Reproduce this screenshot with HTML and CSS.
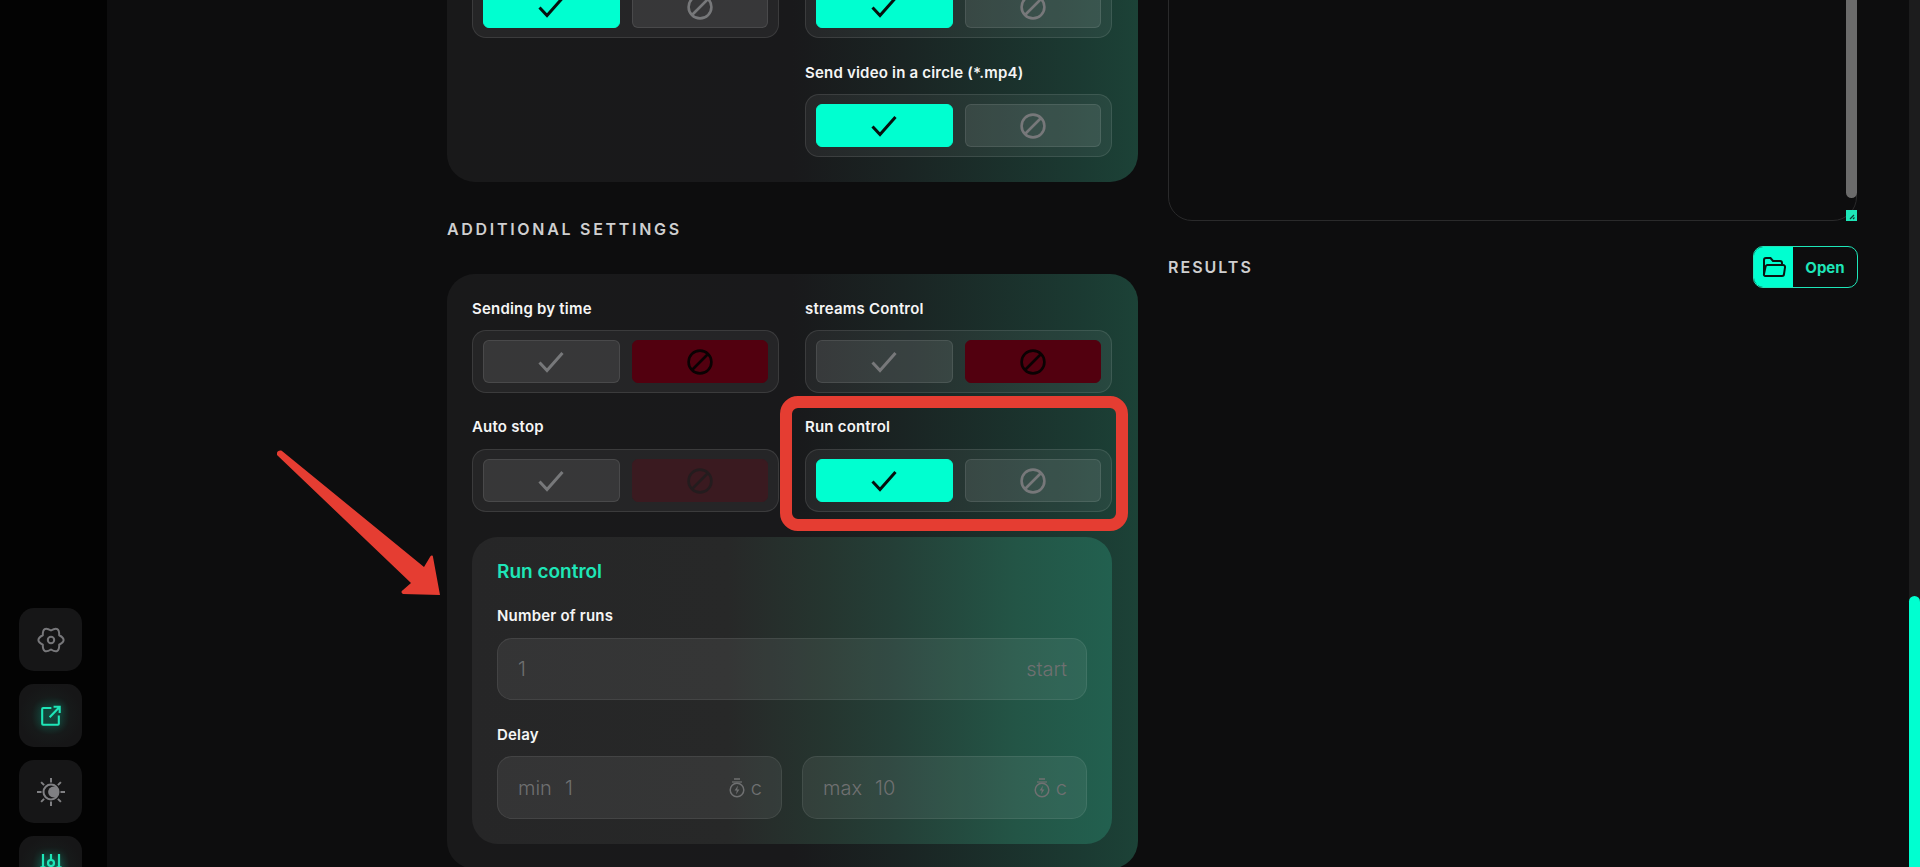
FILE: index.html
```html
<!DOCTYPE html>
<html lang="en">
<head>
<meta charset="utf-8">
<title>Settings</title>
<link rel="stylesheet" href="styles.css">
</head>
<body>
<svg class="sprite" width="0" height="0" aria-hidden="true">
  <symbol id="check" viewBox="0 0 26 22"><path d="M1.500 11.500 9 19.500 24.500 2" fill="none" stroke="currentColor" stroke-width="3"/></symbol>
  <symbol id="ban" viewBox="0 0 26 26"><circle cx="13" cy="13" r="11.400" fill="none" stroke="currentColor" stroke-width="2.600"/><path d="M20.500 5.500 5.500 20.500" fill="none" stroke="currentColor" stroke-width="2.600"/></symbol>
  <symbol id="timer" viewBox="0 0 16 20"><path d="M5 1h6" fill="none" stroke="currentColor" stroke-width="1.500"/><path d="M3 4h10" fill="none" stroke="currentColor" stroke-width="1.200"/><circle cx="8" cy="12" r="6.800" fill="none" stroke="currentColor" stroke-width="1.500"/><path d="M9 7.500 5.600 12.600h2.200L7 16.500l3.400-5.100H8.200z" fill="currentColor"/></symbol>
</svg>
<div class="app">
  <aside class="sidebar">
    <button class="side-btn">
      <svg width="28" height="28" viewBox="0 0 28 28" fill="none" stroke="#77777a" stroke-width="2" stroke-linejoin="round"><path d="M14 4.500Q22.500-.7 22.200 9.250 31 14 22.200 18.750 22.500 28.700 14 23.500 5.500 28.700 5.800 18.750-3 14 5.800 9.250 5.500-.7 14 4.500z"/><circle cx="14" cy="14" r="3.200"/></svg>
    </button>
    <button class="side-btn side-btn-on">
      <svg width="21" height="21" viewBox="0 0 24 24" fill="none" stroke="#1ee6b8" stroke-width="2.400"><path d="M13 3.500H3.500a1 1 0 0 0-1 1v17a1 1 0 0 0 1 1h17a1 1 0 0 0 1-1V12"/><path d="M11 14 22 2.500M15.500 2H22.500V9"/></svg>
    </button>
    <button class="side-btn">
      <svg width="30" height="30" viewBox="0 0 30 30" fill="none" stroke="#808083" stroke-width="2"><circle cx="15" cy="15" r="7.500"/><path d="M15 1v4.500M15 24.500V29M1 15h4.500M24.500 15H29M5.100 5.100l3 3M21.900 21.900l3 3M5.100 24.900l3-3M21.900 8.100l3-3"/><circle cx="17.500" cy="15" r="5.400" fill="#808083" stroke="none"/></svg>
    </button>
    <button class="side-btn side-btn-on">
      <svg width="22" height="28" viewBox="0 0 22 28" fill="none" stroke="#1ee6b8" stroke-width="2.200"><path d="M3 0v13M3 19v9M11 0v6M11 12v16M19 0v13M19 19v9"/><circle cx="3" cy="16" r="3"/><circle cx="11" cy="9" r="3"/><circle cx="19" cy="16" r="3"/></svg>
    </button>
  </aside>
  <main class="main">
    <section class="col-left">
      <div class="card card-top">
        <div class="field">
          <div class="group">
            <div class="opt opt-on"><svg class="ico-check"><use href="#check"/></svg></div>
            <div class="opt"><svg class="ico-ban"><use href="#ban"/></svg></div>
          </div>
        </div>
        <div class="field">
          <div class="group">
            <div class="opt opt-on"><svg class="ico-check"><use href="#check"/></svg></div>
            <div class="opt"><svg class="ico-ban"><use href="#ban"/></svg></div>
          </div>
        </div>
        <div class="field field-second">
          <div class="label">Send video in a circle (*.mp4)</div>
          <div class="group">
            <div class="opt opt-on"><svg class="ico-check"><use href="#check"/></svg></div>
            <div class="opt"><svg class="ico-ban"><use href="#ban"/></svg></div>
          </div>
        </div>
      </div>

      <h2 class="section-title heading-additional">ADDITIONAL SETTINGS</h2>

      <div class="card">
        <div class="field">
          <div class="label">Sending by time</div>
          <div class="group">
            <div class="opt"><svg class="ico-check"><use href="#check"/></svg></div>
            <div class="opt opt-off"><svg class="ico-ban"><use href="#ban"/></svg></div>
          </div>
        </div>
        <div class="field">
          <div class="label">streams Control</div>
          <div class="group">
            <div class="opt"><svg class="ico-check"><use href="#check"/></svg></div>
            <div class="opt opt-off"><svg class="ico-ban"><use href="#ban"/></svg></div>
          </div>
        </div>
        <div class="field field-low">
          <div class="label">Auto stop</div>
          <div class="group">
            <div class="opt"><svg class="ico-check"><use href="#check"/></svg></div>
            <div class="opt opt-off-dim"><svg class="ico-ban"><use href="#ban"/></svg></div>
          </div>
        </div>
        <div class="field field-low field-marked">
          <div class="label">Run control</div>
          <div class="group">
            <div class="opt opt-on"><svg class="ico-check"><use href="#check"/></svg></div>
            <div class="opt"><svg class="ico-ban"><use href="#ban"/></svg></div>
          </div>
          <div class="red-frame"></div>
        </div>

        <div class="panel">
          <svg class="red-arrow" width="170" height="150" viewBox="0 0 170 150">
            <path d="M1 3C1 1 4 0 6 1L148 117 154 107C155 105 157 105 157 107L164 145 127 144C125 143 125 141 127 140L135 133 1 5z" fill="#e53d32"/>
          </svg>
          <h3 class="panel-title">Run control</h3>
          <div class="label label-panel">Number of runs</div>
          <div class="input input-runs">
            <span class="val">1</span>
            <span class="suffix">start</span>
          </div>
          <div class="label label-panel label-delay">Delay</div>
          <div class="input-row">
            <div class="input">
              <span class="pre">min</span><span class="val">1</span>
              <span class="suffix"><svg class="ico-timer"><use href="#timer"/></svg>c</span>
            </div>
            <div class="input">
              <span class="pre">max</span><span class="val">10</span>
              <span class="suffix"><svg class="ico-timer"><use href="#timer"/></svg>c</span>
            </div>
          </div>
        </div>
      </div>
    </section>

    <section class="col-right">
      <div class="textbox">
        <div class="textbox-thumb"></div>
        <div class="textbox-grip"><svg width="11" height="11" viewBox="0 0 11 11"><path d="M4 9 8 5M7 9 8.500 7.500" stroke="#0b3b33" stroke-width="1.200" fill="none"/></svg></div>
      </div>
      <div class="results-row">
        <h2 class="section-title">RESULTS</h2>
        <button class="open-btn">
          <span class="open-ico">
            <svg width="24" height="20" viewBox="0 0 24 20" fill="none" stroke="#0a1412" stroke-width="2"><path d="M2 17V3a2 2 0 0 1 2-2h4.500l2.500 3h7a2 2 0 0 1 2 2v1"/><path d="M5.500 8h15.500a2 2 0 0 1 2 2.300l-1 6.700a2 2 0 0 1-2 2H3.500a1.500 1.500 0 0 1-1.500-2l1.500-7a2 2 0 0 1 2-2z"/></svg>
          </span>
          <span class="open-text">Open</span>
        </button>
      </div>
    </section>
  </main>
  <div class="page-scroll"><div class="page-thumb"></div></div>
</div>
</body>
</html>
```
FILE: styles.css
```css
* { box-sizing: border-box; margin: 0; padding: 0; }
html, body { height: 100%; overflow: hidden; background: #0d0d0e; }
body { font-family: "Inter", "Liberation Sans", sans-serif; color: #fff; }
.sprite { position: absolute; }

.app { display: flex; height: 867px; overflow: hidden; }

.sidebar {
  flex: 0 0 107px;
  background: #030303;
  padding: 608px 0 0 19px;
  display: flex;
  flex-direction: column;
  gap: 13px;
  overflow: hidden;
}
.side-btn {
  flex: 0 0 63px;
  width: 63px;
  border: 0;
  border-radius: 15px;
  background: #161617;
  display: flex;
  align-items: center;
  justify-content: center;
}
.side-btn-on {
  background: radial-gradient(circle at 50% 50%, #15352e 0, #171a1a 45%, #161617 70%);
}
.side-btn-on svg { filter: drop-shadow(0 0 4px rgba(0, 255, 205, .45)); }

.main {
  flex: 1;
  display: flex;
  gap: 30px;
  padding-left: 340px;
  padding-right: 52px;
  min-width: 0;
  align-items: flex-start;
}
.col-left { flex: 0 0 691px; margin-top: -50px; }
.col-right { flex: 0 0 689px; margin-top: -50px; }

.card {
  border-radius: 28px;
  padding: 25px 26px 25px 25px;
  background: linear-gradient(90deg, #19191a 0, #19191b 50%, #1a2423 66%, #1b3a32 92%, #1c4237 100%);
  display: grid;
  grid-template-columns: 1fr 1fr;
  column-gap: 26px;
  row-gap: 25px;
}
.field { position: relative; min-width: 0; }
.field-second { grid-column: 2; }
.field-low { margin-top: -1px; }
.field-low .label { margin-bottom: 12px; }

.label {
  font-size: 15px;
  line-height: 20px;
  font-weight: 600;
  letter-spacing: .2px;
  margin-bottom: 11px;
  color: #f5f5f5;
  white-space: nowrap;
}
.group {
  height: 63px;
  border: 1px solid rgba(255, 255, 255, .1);
  border-radius: 14px;
  background: rgba(255, 255, 255, .055);
  padding: 9px 10px;
  display: grid;
  grid-template-columns: 1fr 1fr;
  column-gap: 12px;
}
.opt {
  border: 1px solid rgba(255, 255, 255, .09);
  border-radius: 6px;
  background: rgba(255, 255, 255, .085);
  color: #77787a;
  display: flex;
  align-items: center;
  justify-content: center;
}
.opt-on { background: #00ffd0; border-color: #00ffd0; color: #06100e; }
.opt-off { background: #52000f; border-color: #52000f; color: #0a0203; }
.opt-off-dim { background: #3a1a20; border-color: #3a1a20; color: #241c1e; }
.ico-check { width: 26px; height: 22px; }
.ico-ban { width: 26px; height: 26px; }

.section-title {
  font-size: 16px;
  line-height: 20px;
  font-weight: 600;
  letter-spacing: 2px;
  color: #cfcfd0;
}
.heading-additional { margin: 37px 0 35px; letter-spacing: 2.7px; }

.field-marked { z-index: 2; }
.red-frame {
  position: absolute;
  inset: -21px -16px -19px -25px;
  border: 12px solid #e53d32;
  border-radius: 18px;
  pointer-events: none;
}

.panel {
  grid-column: 1 / -1;
  position: relative;
  border-radius: 26px;
  padding: 23px 25px 25px;
  background: linear-gradient(90deg, #262627 0, #272828 40%, #25352f 55%, #243f37 66%, #235546 85%, #22604f 100%);
  min-width: 0;
}
.red-arrow { position: absolute; left: -196px; top: -87px; }
.panel-title {
  font-size: 19px;
  line-height: 24px;
  font-weight: 600;
  color: #1ee6b8;
  margin-bottom: 22px;
}
.label-panel { margin-bottom: 12px; }
.label-delay { margin-bottom: 11px; }
.input {
  height: 63px;
  border: 1px solid rgba(255, 255, 255, .08);
  border-radius: 15px;
  background: rgba(255, 255, 255, .065);
  padding: 0 19px 0 20px;
  display: flex;
  align-items: center;
  font-size: 20px;
  font-weight: 300;
  color: #6f7071;
}
.input-runs { height: 62px; margin-bottom: 25px; }
.input-row { display: grid; grid-template-columns: 1fr 1fr; column-gap: 20px; }
.pre { margin-right: 13px; }
.suffix { margin-left: auto; display: flex; align-items: center; gap: 6px; }
.ico-timer { width: 16px; height: 20px; }

.textbox {
  position: relative;
  height: 271px;
  border: 1px solid #2a2a2b;
  border-radius: 24px;
  background: #0d0d0e;
  margin-bottom: 25px;
}
.textbox-thumb {
  position: absolute;
  right: -1px;
  top: 0;
  width: 11px;
  height: 247px;
  border-radius: 0 0 6px 6px;
  background: #6b6b6b;
}
.textbox-grip {
  position: absolute;
  right: -1px;
  bottom: -1px;
  width: 11px;
  height: 11px;
  background: #1ee6b8;
  display: flex;
}

.results-row { display: flex; align-items: center; justify-content: space-between; height: 42px; }
.open-btn {
  width: 105px;
  height: 42px;
  margin-right: -1px;
  display: flex;
  border: 1px solid #1ee6b8;
  border-radius: 10px;
  overflow: hidden;
  background: transparent;
  font-family: inherit;
}
.open-ico {
  flex: 0 0 39px;
  background: #00ffd0;
  display: flex;
  align-items: center;
  justify-content: center;
}
.open-text {
  flex: 1;
  display: flex;
  align-items: center;
  justify-content: center;
  font-size: 15px;
  font-weight: 700;
  color: #1ee6b8;
}

.page-scroll {
  position: relative;
  flex: 0 0 11px;
  background: #1c1c1d;
}
.page-thumb {
  position: absolute;
  left: 0;
  right: 0;
  top: 596px;
  bottom: 0;
  background: #00ffd0;
  border-radius: 6px 6px 0 0;
}
```
